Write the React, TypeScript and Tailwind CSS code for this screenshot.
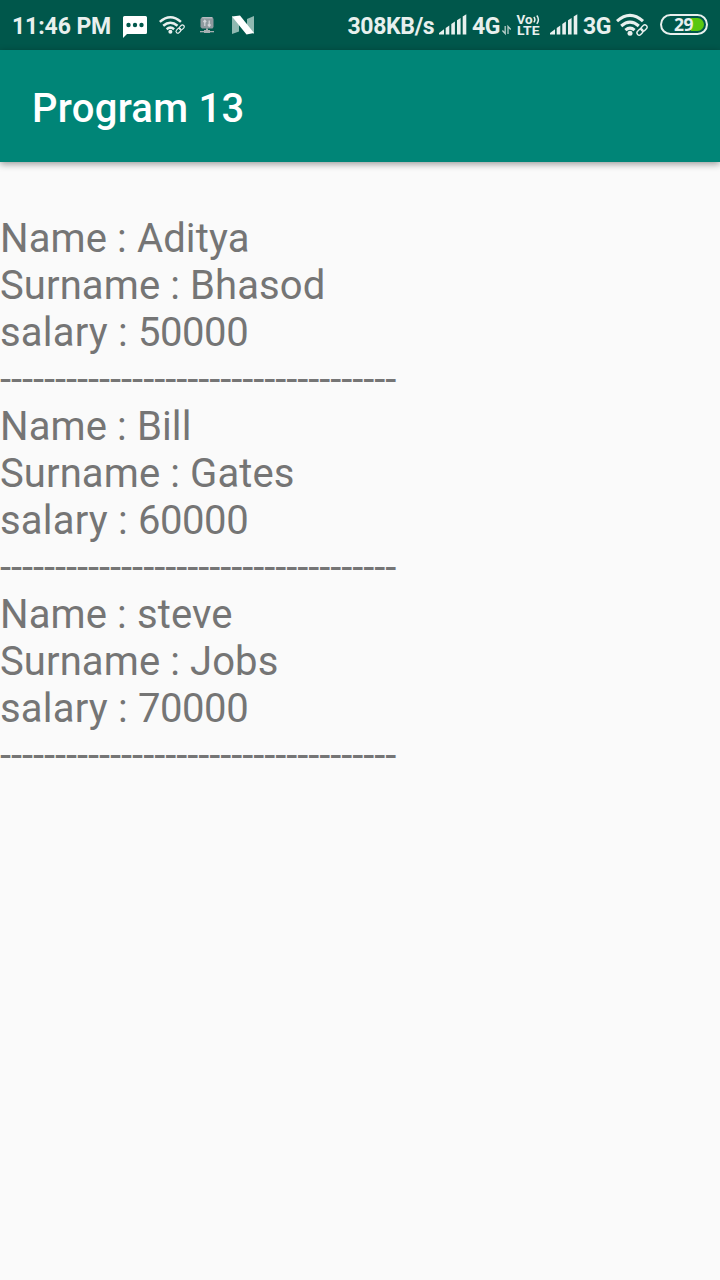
import React from 'react';

const records = [
  { name: 'Aditya', surname: 'Bhasod', salary: '50000' },
  { name: 'Bill', surname: 'Gates', salary: '60000' },
  { name: 'steve', surname: 'Jobs', salary: '70000' },
];

const divider = '-'.repeat(36);

function MessageIcon() {
  return (
    <svg className="ml-[11px] h-[50px] w-[26px] shrink-0" viewBox="122 0 26 50">
      <path d="M124.500 16H145.500Q147 16 147 17.500V32.500Q147 34 145.500 34H127L123 38V17.500Q123 16 124.500 16Z" fill="#fff" />
      <g fill="#00574b">
        <circle cx="128.500" cy="25" r="2.200" />
        <circle cx="135" cy="25" r="2.200" />
        <circle cx="141.500" cy="25" r="2.200" />
      </g>
    </svg>
  );
}

function WifiLinkIcon({ className }: { className: string }) {
  return (
    <svg className={className} viewBox="0 0 32 24" fill="none" stroke="#e8f0ee">
      <path d="M1 8.200Q14 -3.400 27 8.200" strokeWidth="3.100" />
      <path d="M5.200 13Q14 5.400 22.800 13" strokeWidth="3.100" />
      <path d="M9.400 17.200Q14 13.200 18.600 17.200" strokeWidth="3.100" />
      <circle cx="14" cy="20.300" r="2.500" fill="#e8f0ee" stroke="none" />
      <g transform="rotate(-45 26 17)">
        <rect x="18.600" y="13.400" width="14.800" height="7.200" rx="3.600" fill="#00574b" stroke="none" />
        <rect x="19.800" y="14.800" width="6.800" height="4.400" rx="2.200" strokeWidth="1.400" />
        <rect x="25.400" y="14.800" width="6.800" height="4.400" rx="2.200" strokeWidth="1.400" />
      </g>
    </svg>
  );
}

function ServerIcon() {
  return (
    <svg className="ml-[14px] h-[50px] w-[16px] shrink-0" viewBox="199 0 16 50">
      <path d="M200.500 19L202 17H212.500L213.500 19V27L212.500 28.500H202L200.500 27Z" fill="#8f9a9f" />
      <path d="M202.500 17.800H212" stroke="#c8cbd0" strokeWidth="1" />
      <path d="M204.800 26V20.500M203.400 22L204.800 20.300L206.200 22M209.200 20.500V26M207.800 24.500L209.200 26.200L210.600 24.500" stroke="#d4d6da" strokeWidth="1.200" fill="none" />
      <path d="M206 28.500H208V30.500H206ZM204 30H210V33H204Z" fill="#a7b0b2" />
      <path d="M200 31H214V32.300H200Z" fill="#a7b0b2" />
    </svg>
  );
}

function NougatIcon() {
  return (
    <svg className="ml-[16px] h-[50px] w-[23px] shrink-0" viewBox="231 0 23 50">
      <path d="M232 16L239 21V31.500L232 34Z" fill="#8fb9b1" />
      <path d="M254 16V34L247 29V19Z" fill="#8fb9b1" />
      <path d="M232 16.500L240 15.500L254 33L246.500 34.500Z" fill="#fff" />
    </svg>
  );
}

function SignalIcon({ className }: { className: string }) {
  return (
    <svg className={className} viewBox="0 0 28 50" fill="#e8f0ee">
      <path d="M0 34.500V33L5 29.300V34.500ZM6.700 28L10.300 25.400V34.500H6.700ZM12.300 24L15.900 21.500V34.500H12.300ZM18 20.300L21.600 17.900V34.500H18ZM23.700 16.600L27.300 14.300V34.500H23.700Z" />
    </svg>
  );
}

function DataArrowsIcon() {
  return (
    <svg className="h-[50px] w-[10px] shrink-0" viewBox="501 0 10 50" fill="none" stroke="#b9cfca" strokeWidth="1.300">
      <path d="M505.200 26V33.500L502.400 30.500M508 34V26.500L510.800 29.500" />
    </svg>
  );
}

function BatteryIcon() {
  return (
    <svg className="ml-[12px] h-[50px] w-[48px] shrink-0" viewBox="660 0 48 50">
      <rect x="661" y="15" width="46" height="19" rx="9.500" fill="none" stroke="#e8f0ee" strokeWidth="2" />
      <path d="M691 18H697.500A6.500 6.500 0 0 1 697.500 31H691Z" fill="#5ac70f" />
      <text x="674" y="30.700" textLength="19.500" fontSize="17.500" fontWeight="700" fill="#e8f0ee" className="font-['Noto_Sans',sans-serif]">29</text>
    </svg>
  );
}

export default function App() {
  return (
    <div className="flex h-[1280px] w-[720px] flex-col overflow-hidden bg-[#fafafa] font-['Roboto',sans-serif]">
      <header className="flex h-[50px] shrink-0 items-start bg-[#00574b] pl-3 text-[23px] font-bold leading-[54px] text-[#e8f0ee]">
        <span className="w-[99px] shrink-0 whitespace-nowrap tracking-[-0.1px]">11:46 PM</span>
        <MessageIcon />
        <WifiLinkIcon className="ml-[11px] mt-[15px] h-[20px] w-[26px] shrink-0" />
        <ServerIcon />
        <NougatIcon />
        <span className="ml-auto w-[92px] shrink-0 whitespace-nowrap pl-[0.5px] tracking-[-0.35px]">308KB/s</span>
        <SignalIcon className="h-[50px] w-[28px] shrink-0" />
        <span className="ml-[5px] w-[29px] shrink-0 whitespace-nowrap tracking-[-0.5px]">4G</span>
        <DataArrowsIcon />
        <svg className="ml-[5px] h-[50px] w-[24px] shrink-0" viewBox="516 0 24 50" fill="#e8f0ee">
          <text x="516.500" y="24" fontSize="12.500" fontWeight="700" textLength="16" lengthAdjust="spacingAndGlyphs">Vo</text>
          <path d="M533.800 17Q536 19.700 533.800 22.400M536.800 15.500Q540 19.700 536.800 23.900" fill="none" stroke="#e8f0ee" strokeWidth="1.500" />
          <text x="517" y="35.200" fontSize="12.500" fontWeight="700" textLength="22.500" lengthAdjust="spacingAndGlyphs">LTE</text>
        </svg>
        <SignalIcon className="ml-[10px] h-[50px] w-[28px] shrink-0" />
        <span className="ml-[5px] w-[28px] shrink-0 whitespace-nowrap tracking-[-0.5px]">3G</span>
        <WifiLinkIcon className="ml-[5px] mt-[13px] h-[24px] w-[32px] shrink-0" />
        <BatteryIcon />
        <span className="w-3 shrink-0" />
      </header>
      <div className="z-10 flex h-[112px] shrink-0 items-center bg-[#008577] pl-8 pt-1 shadow-[0_2px_7px_rgba(0,0,0,0.4)]">
        <h1 className="text-[40px] font-medium leading-[47px] tracking-[0.28px] text-white">Program 13</h1>
      </div>
      <main className="pt-[53px] text-[40px] leading-[47px] text-[#757575]">
        {records.map((record) => (
          <section key={record.surname} className="whitespace-nowrap">
            <p className="tracking-[0.12px]">Name : {record.name}</p>
            <p className="tracking-[0.1px]">Surname : {record.surname}</p>
            <p>
              <span className="tracking-[0.2px]">salary : </span>
              <span className="tracking-[-0.46px]">{record.salary}</span>
            </p>
            <p className="tracking-[-0.045px]">{divider}</p>
          </section>
        ))}
      </main>
    </div>
  );
}
